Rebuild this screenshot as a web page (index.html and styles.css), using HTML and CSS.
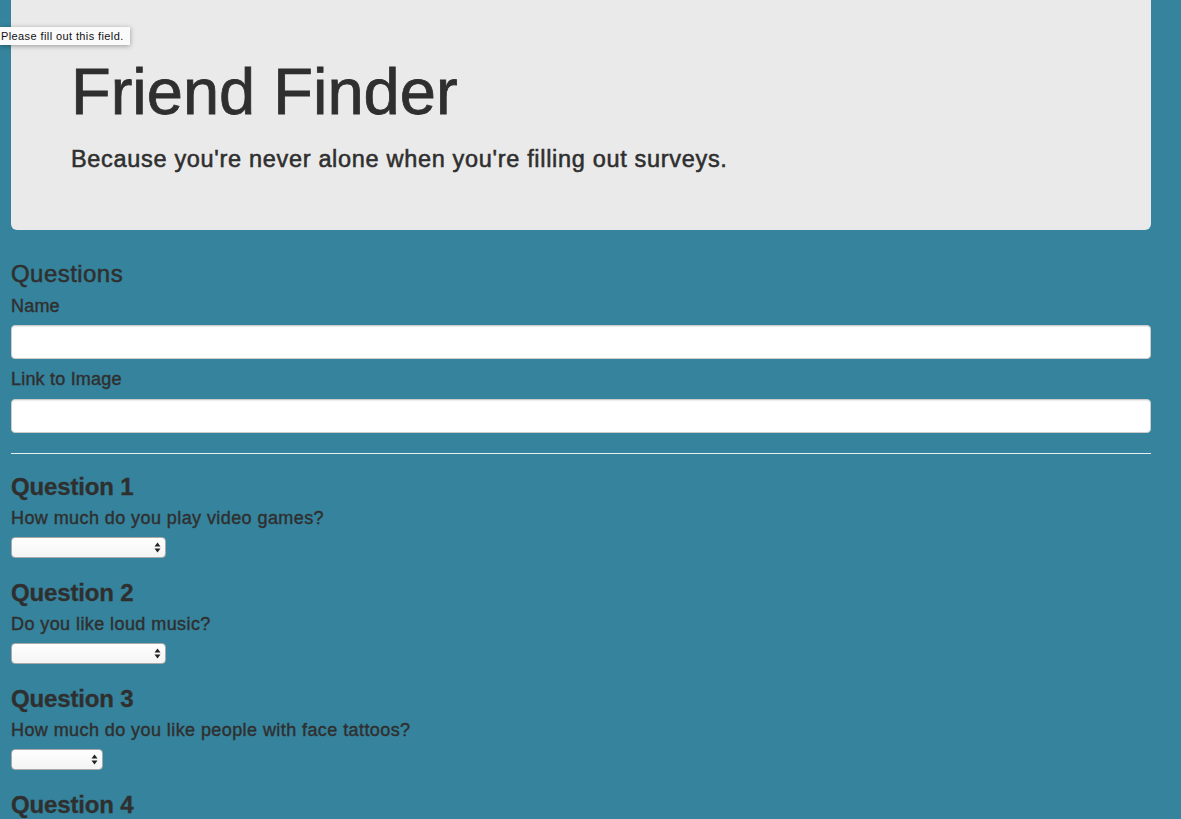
FILE: index.html
```html
<!DOCTYPE html>
<html>
<head>
<meta charset="utf-8">
<title>Friend Finder</title>
<link rel="stylesheet" href="styles.css">
</head>
<body>
<div class="tooltip">Please fill out this field.</div>
<div class="container">
  <header class="jumbotron">
    <h1>Friend Finder</h1>
    <p>Because you're never alone when you're filling out surveys.</p>
  </header>
  <form class="survey">
    <h3 class="section-title">Questions</h3>
    <label class="field-label first" for="name">Name</label>
    <input class="form-control" id="name" type="text" required>
    <label class="field-label" for="photo">Link to Image</label>
    <input class="form-control" id="photo" type="text" required>
    <hr class="divider">
    <div class="question">
      <h3 class="q-title">Question 1</h3>
      <p class="q-text">How much do you play video games?</p>
      <span class="select-wrap wide"><select><option></option></select><svg class="arrows" viewBox="0 0 7 11" width="7" height="11"><path d="M3.5 0.5 L6.5 4.5 L0.5 4.5 Z M3.5 10.5 L6.5 6.5 L0.5 6.5 Z" fill="#222"/></svg></span>
    </div>
    <div class="question">
      <h3 class="q-title">Question 2</h3>
      <p class="q-text">Do you like loud music?</p>
      <span class="select-wrap wide"><select><option></option></select><svg class="arrows" viewBox="0 0 7 11" width="7" height="11"><path d="M3.5 0.5 L6.5 4.5 L0.5 4.5 Z M3.5 10.5 L6.5 6.5 L0.5 6.5 Z" fill="#222"/></svg></span>
    </div>
    <div class="question">
      <h3 class="q-title">Question 3</h3>
      <p class="q-text">How much do you like people with face tattoos?</p>
      <span class="select-wrap narrow"><select><option></option></select><svg class="arrows" viewBox="0 0 7 11" width="7" height="11"><path d="M3.5 0.5 L6.5 4.5 L0.5 4.5 Z M3.5 10.5 L6.5 6.5 L0.5 6.5 Z" fill="#222"/></svg></span>
    </div>
    <div class="question">
      <h3 class="q-title">Question 4</h3>
    </div>
  </form>
</div>
</body>
</html>
```

FILE: styles.css
```css
html, body {
  margin: 0;
  padding: 0;
}
body {
  background: #35839c;
  color: #2f2f2f;
  font-family: "Liberation Sans", Arial, sans-serif;
  overflow: hidden;
  height: 819px;
}
.container {
  width: 1140px;
  margin-left: 11px;
}
.jumbotron {
  background: #eaeaea;
  border-radius: 0 0 6px 6px;
  padding: 60px 60px 0 60px;
  height: 170px;
}
.jumbotron h1 {
  margin: 0;
  font-size: 65px;
  font-weight: 400;
  line-height: 64px;
  -webkit-text-stroke: 0.8px #2f2f2f;
}
.jumbotron p {
  margin: 20px 0 0 0;
  font-size: 23.5px;
  line-height: 30px;
  font-weight: 400;
  letter-spacing: 0.68px;
  -webkit-text-stroke: 0.55px #2f2f2f;
}
.survey {
  display: flex;
  flex-direction: column;
  align-items: flex-start;
  padding-top: 31px;
}
.section-title {
  margin: 0;
  font-size: 24px;
  line-height: 26px;
  font-weight: 400;
  letter-spacing: 0.45px;
  -webkit-text-stroke: 0.5px #2f2f2f;
}
.field-label {
  display: block;
  margin-top: 10px;
  font-size: 18px;
  line-height: 20px;
  letter-spacing: 0.2px;
  -webkit-text-stroke: 0.4px #2f2f2f;
}
.field-label.first {
  margin-top: 9px;
}
.form-control {
  box-sizing: border-box;
  width: 100%;
  height: 34px;
  margin: 10px 0 0 0;
  border: 1px solid #ccc;
  border-radius: 4px;
  background: #fff;
  box-shadow: inset 0 1px 1px rgba(0,0,0,0.075);
  padding: 6px 12px;
  font-size: 14px;
}
#name {
  margin-top: 9px;
}
.divider {
  width: 100%;
  margin: 20px 0 0 0;
  border: 0;
  border-top: 1px solid #e6eef1;
}
.question {
  display: flex;
  flex-direction: column;
  align-items: flex-start;
  margin-top: 20px;
}
.question + .question {
  margin-top: 22px;
}
.q-title {
  margin: 0;
  font-size: 24px;
  line-height: 26px;
  font-weight: 700;
  letter-spacing: -0.15px;
  -webkit-text-stroke: 0.3px #2f2f2f;
}
.q-text {
  margin: 8px 0 0 0;
  font-size: 18px;
  line-height: 20px;
  letter-spacing: 0.42px;
  -webkit-text-stroke: 0.4px #2f2f2f;
}
.select-wrap {
  position: relative;
  display: inline-block;
  margin-top: 9px;
  height: 21px;
}
.select-wrap.wide { width: 155px; }
.select-wrap.narrow { width: 92px; }
.select-wrap select {
  -webkit-appearance: none;
  appearance: none;
  box-sizing: border-box;
  width: 100%;
  height: 21px;
  border: 1px solid #a9a9a9;
  border-radius: 4px;
  background: linear-gradient(#ffffff, #f4f4f4);
  margin: 0;
  padding: 0;
  display: block;
}
.select-wrap .arrows {
  position: absolute;
  right: 5px;
  top: 5px;
  pointer-events: none;
}
.tooltip {
  position: absolute;
  left: 0;
  top: 27px;
  height: 18px;
  padding: 0 6px 0 1px;
  background: #fafafa;
  font-family: "Liberation Sans", Arial, sans-serif;
  font-size: 11px;
  letter-spacing: 0.4px;
  line-height: 18px;
  color: #111;
  box-shadow: 0 1px 5px rgba(0,0,0,0.35);
  z-index: 10;
}
```
